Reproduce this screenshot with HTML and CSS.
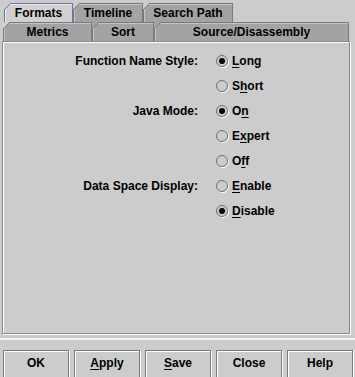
FILE: index.html
```html
<!DOCTYPE html>
<html>
<head>
<meta charset="utf-8">
<link rel="stylesheet" href="styles.css">
</head>
<body>
<div class="dialog">
  <div class="tabs">
    <div class="tab-row back">
      <div class="tab selected w-formats">Formats</div>
      <div class="tab w-timeline">Timeline</div>
      <div class="tab w-search">Search Path</div>
    </div>
    <div class="tab-row front">
      <div class="tab w-metrics">Metrics</div>
      <div class="tab w-sort">Sort</div>
      <div class="tab w-source">Source/Disassembly</div>
    </div>
  </div>
  <div class="panel">
    <div class="form">
      <div class="label">Function Name Style:</div>
      <div class="radio on"><svg class="rb" viewBox="0 0 13 13"><circle class="hl" cx="7" cy="7" r="5.5"/><circle class="ring" cx="6" cy="6" r="5.5"/><circle class="dot" cx="6" cy="6" r="3"/></svg><span><u>L</u>ong</span></div>
      <div class="label"></div>
      <div class="radio"><svg class="rb" viewBox="0 0 13 13"><circle class="hl" cx="7" cy="7" r="5.5"/><circle class="ring" cx="6" cy="6" r="5.5"/></svg><span>S<u>h</u>ort</span></div>
      <div class="label">Java Mode:</div>
      <div class="radio on"><svg class="rb" viewBox="0 0 13 13"><circle class="hl" cx="7" cy="7" r="5.5"/><circle class="ring" cx="6" cy="6" r="5.5"/><circle class="dot" cx="6" cy="6" r="3"/></svg><span>O<u>n</u></span></div>
      <div class="label"></div>
      <div class="radio"><svg class="rb" viewBox="0 0 13 13"><circle class="hl" cx="7" cy="7" r="5.5"/><circle class="ring" cx="6" cy="6" r="5.5"/></svg><span>E<u>x</u>pert</span></div>
      <div class="label"></div>
      <div class="radio"><svg class="rb" viewBox="0 0 13 13"><circle class="hl" cx="7" cy="7" r="5.5"/><circle class="ring" cx="6" cy="6" r="5.5"/></svg><span>O<u>f</u>f</span></div>
      <div class="label">Data Space Display:</div>
      <div class="radio"><svg class="rb" viewBox="0 0 13 13"><circle class="hl" cx="7" cy="7" r="5.5"/><circle class="ring" cx="6" cy="6" r="5.5"/></svg><span><u>E</u>nable</span></div>
      <div class="label"></div>
      <div class="radio on"><svg class="rb" viewBox="0 0 13 13"><circle class="hl" cx="7" cy="7" r="5.5"/><circle class="ring" cx="6" cy="6" r="5.5"/><circle class="dot" cx="6" cy="6" r="3"/></svg><span><u>D</u>isable</span></div>
    </div>
  </div>
  <div class="sep"></div>
  <div class="buttons">
    <div class="btn">OK</div>
    <div class="btn"><u>A</u>pply</div>
    <div class="btn"><u>S</u>ave</div>
    <div class="btn">Close</div>
    <div class="btn">Help</div>
  </div>
</div>
</body>
</html>
```
FILE: styles.css
```css
html, body {
  margin: 0;
  padding: 0;
  background: #cccccc;
}
body {
  width: 355px;
  height: 377px;
  overflow: hidden;
  font-family: "Liberation Sans", Arial, sans-serif;
  font-size: 12px;
  font-weight: bold;
  color: #000;
}
u {
  text-decoration: underline;
  text-decoration-thickness: 1px;
  text-underline-offset: 2px;
}
.dialog {
  display: flex;
  flex-direction: column;
  padding-top: 3px;
}
.tab-row {
  display: flex;
  height: 19px;
}
.tab-row.back { padding-left: 4px; }
.tab-row.front { padding-left: 3px; }
.tab {
  position: relative;
  box-sizing: border-box;
  height: 19px;
  border: 1px solid #7a7a7a;
  border-bottom: none;
  background: #a3a3a3;
  box-shadow: inset 1px 1px 0 #c4c4c4;
  text-align: center;
  line-height: 16px;
  padding-top: 1px;
  white-space: nowrap;
}
.tab::before {
  content: "";
  position: absolute;
  top: -1px;
  left: -1px;
  width: 7px;
  height: 7px;
  background: linear-gradient(to bottom right, var(--behind) 0 calc(50% - 0.5px), #7a7a7a calc(50% - 0.5px) calc(50% + 0.5px), transparent calc(50% + 0.5px));
}
.back .tab { --behind: #cccccc; }
.front .tab { --behind: #a3a3a3; }
.front .tab.w-metrics { --behind: #d0d0d0; }
.tab.selected {
  background: #d0d0d0;
  border: 1px solid #6f6fb8;
  border-bottom: none;
  box-shadow: inset 1px 1px 0 #ececec;
}
.w-formats { width: 69px; }
.w-timeline { width: 70px; }
.w-search { width: 90px; }
.w-metrics { width: 89px; }
.w-sort { width: 62px; }
.w-source { width: 195px; }

.panel {
  box-sizing: border-box;
  margin-left: 2px;
  width: 348px;
  height: 293px;
  border: 1px solid #8a8a8a;
  box-shadow: inset 1px 1px 0 #ffffff, 1px 1px 0 #ffffff;
  padding-top: 7px;
  padding-left: 0;
}
.form {
  display: grid;
  grid-template-columns: 195px auto;
  column-gap: 18px;
  grid-auto-rows: 25px;
  line-height: 25px;
}
.label {
  text-align: right;
  white-space: nowrap;
}
.radio {
  display: flex;
  align-items: center;
  gap: 3px;
  white-space: nowrap;
}
.rb {
  width: 13px;
  height: 13px;
  flex: none;
}
.rb .hl { fill: none; stroke: #ffffff; stroke-width: 1; }
.rb .ring { fill: #cccccc; stroke: #6e6e6e; stroke-width: 1; }
.rb .dot { fill: #000000; }

.sep {
  margin-top: 4px;
  height: 2px;
  background: #f4f4f4;
}
.buttons {
  display: flex;
  gap: 5px;
  padding-left: 3px;
  margin-top: 10px;
}
.btn {
  box-sizing: border-box;
  width: 66px;
  height: 30px;
  border: 1px solid #7a7a7a;
  box-shadow: inset 1px 1px 0 #ffffff, 1px 1px 0 #ffffff;
  text-align: center;
  line-height: 14px;
  padding-top: 5px;
}
```
